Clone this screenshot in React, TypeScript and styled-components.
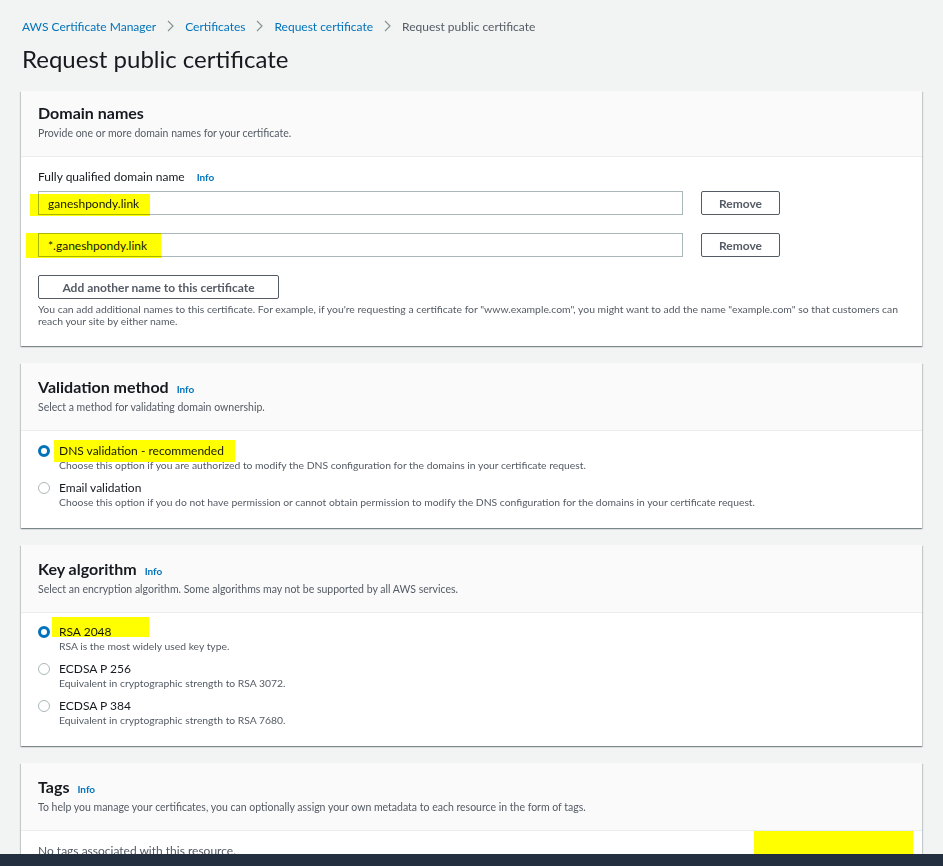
import React from 'react';
import styled, { createGlobalStyle } from 'styled-components';

const GlobalStyle = createGlobalStyle`
  body {
    margin: 0;
    background: #f2f3f3;
    font-family: Lato, "Open Sans", sans-serif;
    color: #16191f;
  }
`;

const Page = styled.div`
  padding: 18px 21px 40px 21px;
`;

const Breadcrumbs = styled.nav`
  display: flex;
  align-items: center;
  height: 16px;
  padding-left: 1px;
  font-size: 12px;
`;

const Crumb = styled.span<{ $current?: boolean }>`
  color: ${(p) => (p.$current ? '#545b64' : '#0073bb')};
  white-space: nowrap;
`;

const ChevronBox = styled.span`
  display: inline-flex;
  margin: 0 11px;
`;

const Title = styled.h1`
  margin: 10px 0 17px 1px;
  font-size: 24px;
  line-height: 30px;
  font-weight: 400;
  color: #16191f;
`;

const Stack = styled.div`
  display: flex;
  flex-direction: column;
  gap: 17px;
`;

const Panel = styled.section`
  background: #fff;
  box-shadow: 0 1px 1px 0 rgba(0, 28, 36, 0.3), 1px 1px 1px 0 rgba(0, 28, 36, 0.15),
    -1px 1px 1px 0 rgba(0, 28, 36, 0.15);
`;

const PanelHeader = styled.header<{ $top?: number }>`
  background: #fafafa;
  border-bottom: 1px solid #eaeded;
  padding: ${(p) => p.$top ?? 14}px 17px 16px 17px;
`;

const PanelTitle = styled.h2`
  display: flex;
  align-items: baseline;
  gap: 8px;
  height: 20px;
  margin: 0;
  font-size: 16px;
  line-height: 20px;
  font-weight: 700;
`;

const InfoLink = styled.span`
  font-size: 10px;
  line-height: 1;
  font-weight: 700;
  color: #0073bb;
`;

const PanelDescription = styled.p`
  margin: 3px 0 0 0;
  font-size: 10.5px;
  line-height: 14px;
  color: #545b64;
`;

const PanelBody = styled.div<{ $top?: number; $bottom?: number }>`
  position: relative;
  padding: ${(p) => p.$top ?? 12}px 17px ${(p) => p.$bottom ?? 19}px 17px;
`;

const FieldLabel = styled.div`
  display: flex;
  align-items: baseline;
  gap: 12px;
  height: 16px;
  font-size: 12px;
  line-height: 16px;
  color: #16191f;
`;

const FieldRows = styled.div`
  display: flex;
  flex-direction: column;
  gap: 18px;
  margin-top: 6px;
`;

const InputRow = styled.div`
  display: flex;
  align-items: center;
  gap: 18px;
`;

const InputWrap = styled.div`
  position: relative;
  width: 645px;
`;

const TextField = styled.div`
  box-sizing: border-box;
  height: 24px;
  border: 1px solid #aab7b8;
  background: #fff;
  padding: 0 9px;
  display: flex;
  align-items: center;
  font-size: 12px;
  color: #16191f;
`;

const Highlight = styled.span<{ $left: number; $top: number; $width: number; $height: number }>`
  position: absolute;
  left: ${(p) => p.$left}px;
  top: ${(p) => p.$top}px;
  width: ${(p) => p.$width}px;
  height: ${(p) => p.$height}px;
  background: #ffff00;
  mix-blend-mode: multiply;
  pointer-events: none;
`;

const OutlineButton = styled.button<{ $width: number }>`
  box-sizing: border-box;
  display: block;
  width: ${(p) => p.$width}px;
  height: 24px;
  border: 1px solid #545b64;
  border-radius: 2px;
  background: #fff;
  font-family: inherit;
  font-size: 12px;
  font-weight: 700;
  color: #545b64;
  padding: 0;
`;

const HelpText = styled.p`
  margin: 4px 0 0 0;
  font-size: 10.4px;
  line-height: 12px;
  color: #545b64;
`;

const RadioList = styled.div`
  display: flex;
  flex-direction: column;
  gap: 8px;
`;

const RadioOption = styled.div`
  display: grid;
  grid-template-columns: 12px 1fr;
  column-gap: 9px;
`;

const RadioDot = styled.span<{ $checked?: boolean }>`
  box-sizing: border-box;
  width: 12px;
  height: 12px;
  margin-top: 2px;
  border-radius: 50%;
  background: #fff;
  border: ${(p) => (p.$checked ? '3.5px solid #0073bb' : '1px solid #aab7b8')};
`;

const OptionText = styled.div`
  display: flex;
  flex-direction: column;
`;

const OptionLabel = styled.span`
  position: relative;
  font-size: 12px;
  line-height: 15px;
  color: #16191f;
`;

const OptionDescription = styled.span`
  font-size: 10.35px;
  line-height: 14px;
  color: #545b64;
`;

const EmptyText = styled.div`
  font-size: 12px;
  line-height: 16px;
  color: #545b64;
`;

const Footer = styled.footer`
  position: fixed;
  left: 0;
  right: 0;
  bottom: 0;
  height: 12px;
  background: #232f3e;
`;

function Chevron() {
  return (
    <ChevronBox>
      <svg width="7" height="12" viewBox="0 0 7 12">
        <path d="M1 1l5 5-5 5" fill="none" stroke="#879596" strokeWidth="1.2" />
      </svg>
    </ChevronBox>
  );
}

type Option = { label: string; description: string; checked?: boolean; mark?: [number, number, number, number] };

function RadioGroup({ options }: { options: Option[] }) {
  return (
    <RadioList>
      {options.map((o) => (
        <RadioOption key={o.label}>
          <RadioDot $checked={o.checked} />
          <OptionText>
            <OptionLabel>
              {o.label}
              {o.mark && <Highlight $left={o.mark[0]} $top={o.mark[1]} $width={o.mark[2]} $height={o.mark[3]} />}
            </OptionLabel>
            <OptionDescription>{o.description}</OptionDescription>
          </OptionText>
        </RadioOption>
      ))}
    </RadioList>
  );
}

const domains = [
  { value: 'ganeshpondy.link', mark: [-8, 3, 120, 22] },
  { value: '*.ganeshpondy.link', mark: [-12, 0, 135, 25] },
];

export default function App() {
  return (
    <>
      <GlobalStyle />
      <Page>
        <Breadcrumbs>
          <Crumb>AWS Certificate Manager</Crumb>
          <Chevron />
          <Crumb>Certificates</Crumb>
          <Chevron />
          <Crumb>Request certificate</Crumb>
          <Chevron />
          <Crumb $current>Request public certificate</Crumb>
        </Breadcrumbs>
        <Title>Request public certificate</Title>

        <Stack>
          <Panel>
            <PanelHeader $top={12}>
              <PanelTitle>Domain names</PanelTitle>
              <PanelDescription>Provide one or more domain names for your certificate.</PanelDescription>
            </PanelHeader>
            <PanelBody $bottom={19}>
              <FieldLabel>
                Fully qualified domain name <InfoLink>Info</InfoLink>
              </FieldLabel>
              <FieldRows>
                {domains.map((d) => (
                  <InputRow key={d.value}>
                    <InputWrap>
                      <TextField>{d.value}</TextField>
                      <Highlight $left={d.mark[0]} $top={d.mark[1]} $width={d.mark[2]} $height={d.mark[3]} />
                    </InputWrap>
                    <OutlineButton $width={79}>Remove</OutlineButton>
                  </InputRow>
                ))}
                <div>
                  <OutlineButton $width={241}>Add another name to this certificate</OutlineButton>
                  <HelpText>
                    You can add additional names to this certificate. For example, if you're requesting a certificate
                    for "www.example.com", you might want to add the name "example.com" so that customers can reach
                    your site by either name.
                  </HelpText>
                </div>
              </FieldRows>
            </PanelBody>
          </Panel>

          <Panel>
            <PanelHeader>
              <PanelTitle>
                Validation method <InfoLink>Info</InfoLink>
              </PanelTitle>
              <PanelDescription>Select a method for validating domain ownership.</PanelDescription>
            </PanelHeader>
            <PanelBody>
              <RadioGroup
                options={[
                  {
                    label: 'DNS validation - recommended',
                    description:
                      'Choose this option if you are authorized to modify the DNS configuration for the domains in your certificate request.',
                    checked: true,
                    mark: [-5, -3, 181, 22],
                  },
                  {
                    label: 'Email validation',
                    description:
                      'Choose this option if you do not have permission or cannot obtain permission to modify the DNS configuration for the domains in your certificate request.',
                  },
                ]}
              />
            </PanelBody>
          </Panel>

          <Panel>
            <PanelHeader>
              <PanelTitle>
                Key algorithm <InfoLink>Info</InfoLink>
              </PanelTitle>
              <PanelDescription>
                Select an encryption algorithm. Some algorithms may not be supported by all AWS services.
              </PanelDescription>
            </PanelHeader>
            <PanelBody $top={11}>
              <RadioGroup
                options={[
                  {
                    label: 'RSA 2048',
                    description: 'RSA is the most widely used key type.',
                    checked: true,
                    mark: [-7, -7, 97, 20],
                  },
                  { label: 'ECDSA P 256', description: 'Equivalent in cryptographic strength to RSA 3072.' },
                  { label: 'ECDSA P 384', description: 'Equivalent in cryptographic strength to RSA 7680.' },
                ]}
              />
            </PanelBody>
          </Panel>

          <Panel>
            <PanelHeader>
              <PanelTitle>
                Tags <InfoLink>Info</InfoLink>
              </PanelTitle>
              <PanelDescription>
                To help you manage your certificates, you can optionally assign your own metadata to each resource in
                the form of tags.
              </PanelDescription>
            </PanelHeader>
            <PanelBody $bottom={20}>
              <EmptyText>No tags associated with this resource.</EmptyText>
              <Highlight $left={733} $top={0} $width={159} $height={40} />
            </PanelBody>
          </Panel>
        </Stack>
      </Page>
      <Footer />
    </>
  );
}
